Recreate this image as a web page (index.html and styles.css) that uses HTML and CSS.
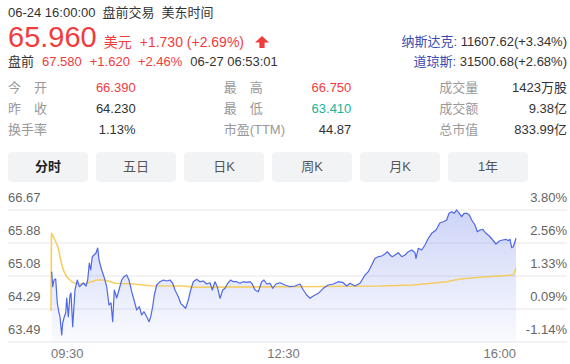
FILE: index.html
```html
<!DOCTYPE html>
<html lang="zh-CN">

<head>
    <meta charset="UTF-8">
    <meta name="viewport" content="width=device-width, initial-scale=1.0">
    <title>分时走势</title>
    <link rel="stylesheet" href="styles.css">
</head>

<body>
    <div class="page">
        <!-- Quote header -->
        <div class="quote-head">
            <div class="quote-main">
                <div class="meta-line">
                    <span>06-24 16:00:00</span><span>盘前交易</span><span>美东时间</span>
                </div>
                <div class="price-line">
                    <span class="price up">65.960</span><span class="unit up">美元</span><span class="change up">+1.730 (+2.69%)</span>
                    <svg class="arrow" width="14" height="12" viewBox="0 0 14 12">
                        <path d="M7 0 L14 6.5 L9.6 6.5 L9.6 12 L4.4 12 L4.4 6.5 L0 6.5 Z" fill="#f23c3c" />
                    </svg>
                </div>
                <div class="meta-line pre">
                    <span>盘前</span><span class="up">67.580</span><span class="up">+1.620</span><span class="up">+2.46%</span><span>06-27 06:53:01</span>
                </div>
            </div>
            <div class="indices">
                <div class="index-line first"><span class="index-name">纳斯达克:</span> 11607.62(+3.34%)</div>
                <div class="index-line"><span class="index-name">道琼斯:</span> 31500.68(+2.68%)</div>
            </div>
        </div>

        <!-- Stats -->
        <div class="stats">
            <div class="stat-col">
                <div class="stat"><span class="label">今　开</span><span class="up">66.390</span></div>
                <div class="stat"><span class="label">昨　收</span><span>64.230</span></div>
                <div class="stat"><span class="label">换手率</span><span>1.13%</span></div>
            </div>
            <div class="stat-col">
                <div class="stat"><span class="label">最　高</span><span class="up">66.750</span></div>
                <div class="stat"><span class="label">最　低</span><span class="down">63.410</span></div>
                <div class="stat"><span class="label">市盈(TTM)</span><span>44.87</span></div>
            </div>
            <div class="stat-col">
                <div class="stat"><span class="label">成交量</span><span>1423万股</span></div>
                <div class="stat"><span class="label">成交额</span><span>9.38亿</span></div>
                <div class="stat"><span class="label">总市值</span><span>833.99亿</span></div>
            </div>
        </div>

        <!-- Tabs -->
        <div class="tabs">
            <div class="tab active">分时</div>
            <div class="tab">五日</div>
            <div class="tab">日K</div>
            <div class="tab">周K</div>
            <div class="tab">月K</div>
            <div class="tab">1年</div>
        </div>

        <!-- Chart -->
        <div class="chart">
            <div class="grid-row"><span>66.67</span><span>3.80%</span></div>
            <div class="grid-row"><span>65.88</span><span>2.56%</span></div>
            <div class="grid-row"><span>65.08</span><span>1.33%</span></div>
            <div class="grid-row"><span>64.29</span><span>0.09%</span></div>
            <div class="grid-row"><span>63.49</span><span>-1.14%</span></div>

            <svg class="plot" width="559" height="161" viewBox="8 182 559 161">
                <defs>
                    <linearGradient id="fillGrad" x1="0" y1="210" x2="0" y2="342" gradientUnits="userSpaceOnUse">
                        <stop offset="0" stop-color="#5a70e6" stop-opacity="0.3" />
                        <stop offset="1" stop-color="#5a70e6" stop-opacity="0.03" />
                    </linearGradient>
                </defs>
                <polygon fill="url(#fillGrad)" points="51.7,342 51.7,271.7 52.7,286.7 54,280 55.7,279 57.3,303 59,313 60,316.7 61.7,335 62.7,323 64.3,316.7 65.7,313 66.7,298 68.3,316.7 70,295 71,293 72.7,326.7 75,290 77.3,280 79.3,286.7 81.3,285 83.3,283 86,286 87.7,280 89.3,263 90.7,270 92.3,256.7 94,255 96,253 97.7,248 99,260 101.7,270 104,276.7 106.7,286.7 109,305 111,303 112.7,321.7 114.3,290 116.7,298 119,290 121.7,280 124,276.7 126.7,275 129,280 131.7,291.7 134,300 136.7,310 139.3,306.7 141.7,315 144,311.7 146.7,316.7 149,321.7 150.7,316.7 152.7,306.7 154.3,295 156.7,285 160,281.7 163.3,280 166.7,281 170,280 172.7,283.3 175,290 178.3,296.7 180.7,303.3 183.3,306 185.7,308.3 188.3,300 190.7,290 193.3,281.7 196.7,279.3 200,281.7 203.3,281 206.7,284 210,282.7 212.3,290 215,281.7 217.3,286.7 220,298.3 222.7,290 225,288.3 227.7,283.3 230.7,280 233.3,281.7 236.7,281.7 240,283.3 243.3,281.7 246.7,282.3 250,281.7 252.3,284 255,290 258.3,291.7 261.7,281.7 264,280 266.7,284 270,283.3 272.7,288.3 276,284 280,282.7 285,285 290,286.7 295,286 300,284 303.3,290 306.7,295 310,298.3 313.3,296 318.3,293.3 323.3,288.3 328.3,285 333.3,284 338.3,281.7 343.3,282.7 346.7,286 350,283.3 355,286 360,283.3 365,275 368.3,271.7 371.7,265 375,258.3 378.3,256.7 381.7,256 385,254 387.3,251.7 390,255 392.3,256.7 395,255 398.3,252.7 401.7,256.7 405,255 408.3,251.7 411.7,250 415,252.7 416,258.3 418.3,248.3 421.7,250 425,245 428.3,238.3 431.7,233.3 436,230 440,222.7 443.3,221.7 446.7,220 449,213.3 451.7,211.7 454,213.3 456.7,210 459.3,213.3 461.7,216.7 464,213.3 466.7,213.3 469.3,215 471.7,220 475,225 477.3,231.7 480,230 482.7,229.3 486,233.3 489.3,236 492.7,240 496,244 499.3,241 502.7,240 506,239.3 508.3,240.7 510,239.3 511.7,247.7 513.3,246.7 516,238.3 516,342" />
                <polyline class="avg-line" points="51,311 51.5,233 55,240 58.3,248.3 60.7,260 63.3,270 66.7,276.7 71.7,281.7 76.7,284 86.7,283.3 96.7,280 105,280 115,283.3 133.3,284 150,285.7 183.3,286 193.3,287.3 290,286.7 380,286 413.3,285 446.7,281.7 460,279 480,277.3 513.3,275 516,268.3" />
                <polyline class="price-line-svg" points="51.7,271.7 52.7,286.7 54,280 55.7,279 57.3,303 59,313 60,316.7 61.7,335 62.7,323 64.3,316.7 65.7,313 66.7,298 68.3,316.7 70,295 71,293 72.7,326.7 75,290 77.3,280 79.3,286.7 81.3,285 83.3,283 86,286 87.7,280 89.3,263 90.7,270 92.3,256.7 94,255 96,253 97.7,248 99,260 101.7,270 104,276.7 106.7,286.7 109,305 111,303 112.7,321.7 114.3,290 116.7,298 119,290 121.7,280 124,276.7 126.7,275 129,280 131.7,291.7 134,300 136.7,310 139.3,306.7 141.7,315 144,311.7 146.7,316.7 149,321.7 150.7,316.7 152.7,306.7 154.3,295 156.7,285 160,281.7 163.3,280 166.7,281 170,280 172.7,283.3 175,290 178.3,296.7 180.7,303.3 183.3,306 185.7,308.3 188.3,300 190.7,290 193.3,281.7 196.7,279.3 200,281.7 203.3,281 206.7,284 210,282.7 212.3,290 215,281.7 217.3,286.7 220,298.3 222.7,290 225,288.3 227.7,283.3 230.7,280 233.3,281.7 236.7,281.7 240,283.3 243.3,281.7 246.7,282.3 250,281.7 252.3,284 255,290 258.3,291.7 261.7,281.7 264,280 266.7,284 270,283.3 272.7,288.3 276,284 280,282.7 285,285 290,286.7 295,286 300,284 303.3,290 306.7,295 310,298.3 313.3,296 318.3,293.3 323.3,288.3 328.3,285 333.3,284 338.3,281.7 343.3,282.7 346.7,286 350,283.3 355,286 360,283.3 365,275 368.3,271.7 371.7,265 375,258.3 378.3,256.7 381.7,256 385,254 387.3,251.7 390,255 392.3,256.7 395,255 398.3,252.7 401.7,256.7 405,255 408.3,251.7 411.7,250 415,252.7 416,258.3 418.3,248.3 421.7,250 425,245 428.3,238.3 431.7,233.3 436,230 440,222.7 443.3,221.7 446.7,220 449,213.3 451.7,211.7 454,213.3 456.7,210 459.3,213.3 461.7,216.7 464,213.3 466.7,213.3 469.3,215 471.7,220 475,225 477.3,231.7 480,230 482.7,229.3 486,233.3 489.3,236 492.7,240 496,244 499.3,241 502.7,240 506,239.3 508.3,240.7 510,239.3 511.7,247.7 513.3,246.7 516,238.3" />
            </svg>

            <div class="time-axis">
                <span>09:30</span><span>12:30</span><span>16:00</span>
            </div>
        </div>
    </div>
</body>

</html>
```

FILE: styles.css
```css
body {
    margin: 0;
    background-color: #fff;
    color: #333;
    font-family: "Liberation Sans", "Noto Sans CJK SC", sans-serif;
    font-size: 13px;
}

.page {
    padding: 4px 3px 0 8px;
}

.up {
    color: #f23c3c;
}

.down {
    color: #17b39a;
}

/* header */
.quote-head {
    display: flex;
    justify-content: space-between;
    align-items: flex-end;
}

.meta-line {
    display: flex;
    gap: 7px;
    line-height: 18px;
    white-space: nowrap;
}

.meta-line.pre {
    gap: 8px;
    margin-top: 1px;
}

.price-line {
    height: 30px;
    line-height: 30px;
    white-space: nowrap;
}

.price {
    font-size: 29px;
}

.unit {
    font-size: 14px;
    margin-left: 7px;
}

.change {
    font-size: 14px;
    margin-left: 8px;
}

.arrow {
    margin-left: 7px;
    vertical-align: -1px;
}

.indices {
    text-align: right;
    white-space: nowrap;
}

.index-line {
    line-height: 18px;
}

.index-line.first {
    margin-bottom: 2px;
}

.index-name {
    color: #3b4cb4;
}

/* stats */
.stats {
    display: grid;
    grid-template-columns: 1fr 1fr 1fr;
    column-gap: 88px;
    margin-top: 6px;
}

.stat {
    display: flex;
    justify-content: space-between;
    line-height: 21px;
    white-space: nowrap;
}

.label {
    color: #999;
}

/* tabs */
.tabs {
    display: flex;
    gap: 8px;
    margin-top: 12px;
}

.tab {
    width: 80px;
    height: 30px;
    line-height: 30px;
    text-align: center;
    background-color: #f2f3f5;
    border-radius: 4px;
    color: #555;
}

.tab.active {
    color: #222;
    font-weight: bold;
}

/* chart */
.chart {
    position: relative;
    color: #666;
}

.grid-row {
    box-sizing: border-box;
    height: 33px;
    display: flex;
    justify-content: space-between;
    align-items: flex-end;
    padding-bottom: 4px;
    line-height: 15px;
    border-bottom: 2px solid #f3f3f5;
}

.grid-row:first-child {
    height: 29px;
}

.plot {
    position: absolute;
    left: 0;
    top: 0;
}

.avg-line {
    fill: none;
    stroke: #f5c951;
    stroke-width: 1.6;
    stroke-opacity: 0.9;
}

.price-line-svg {
    fill: none;
    stroke: #4f68e8;
    stroke-width: 1.2;
    stroke-linejoin: round;
}

.time-axis {
    display: flex;
    justify-content: space-between;
    padding: 0 51px 0 43px;
    line-height: 22px;
    color: #777;
}
```
